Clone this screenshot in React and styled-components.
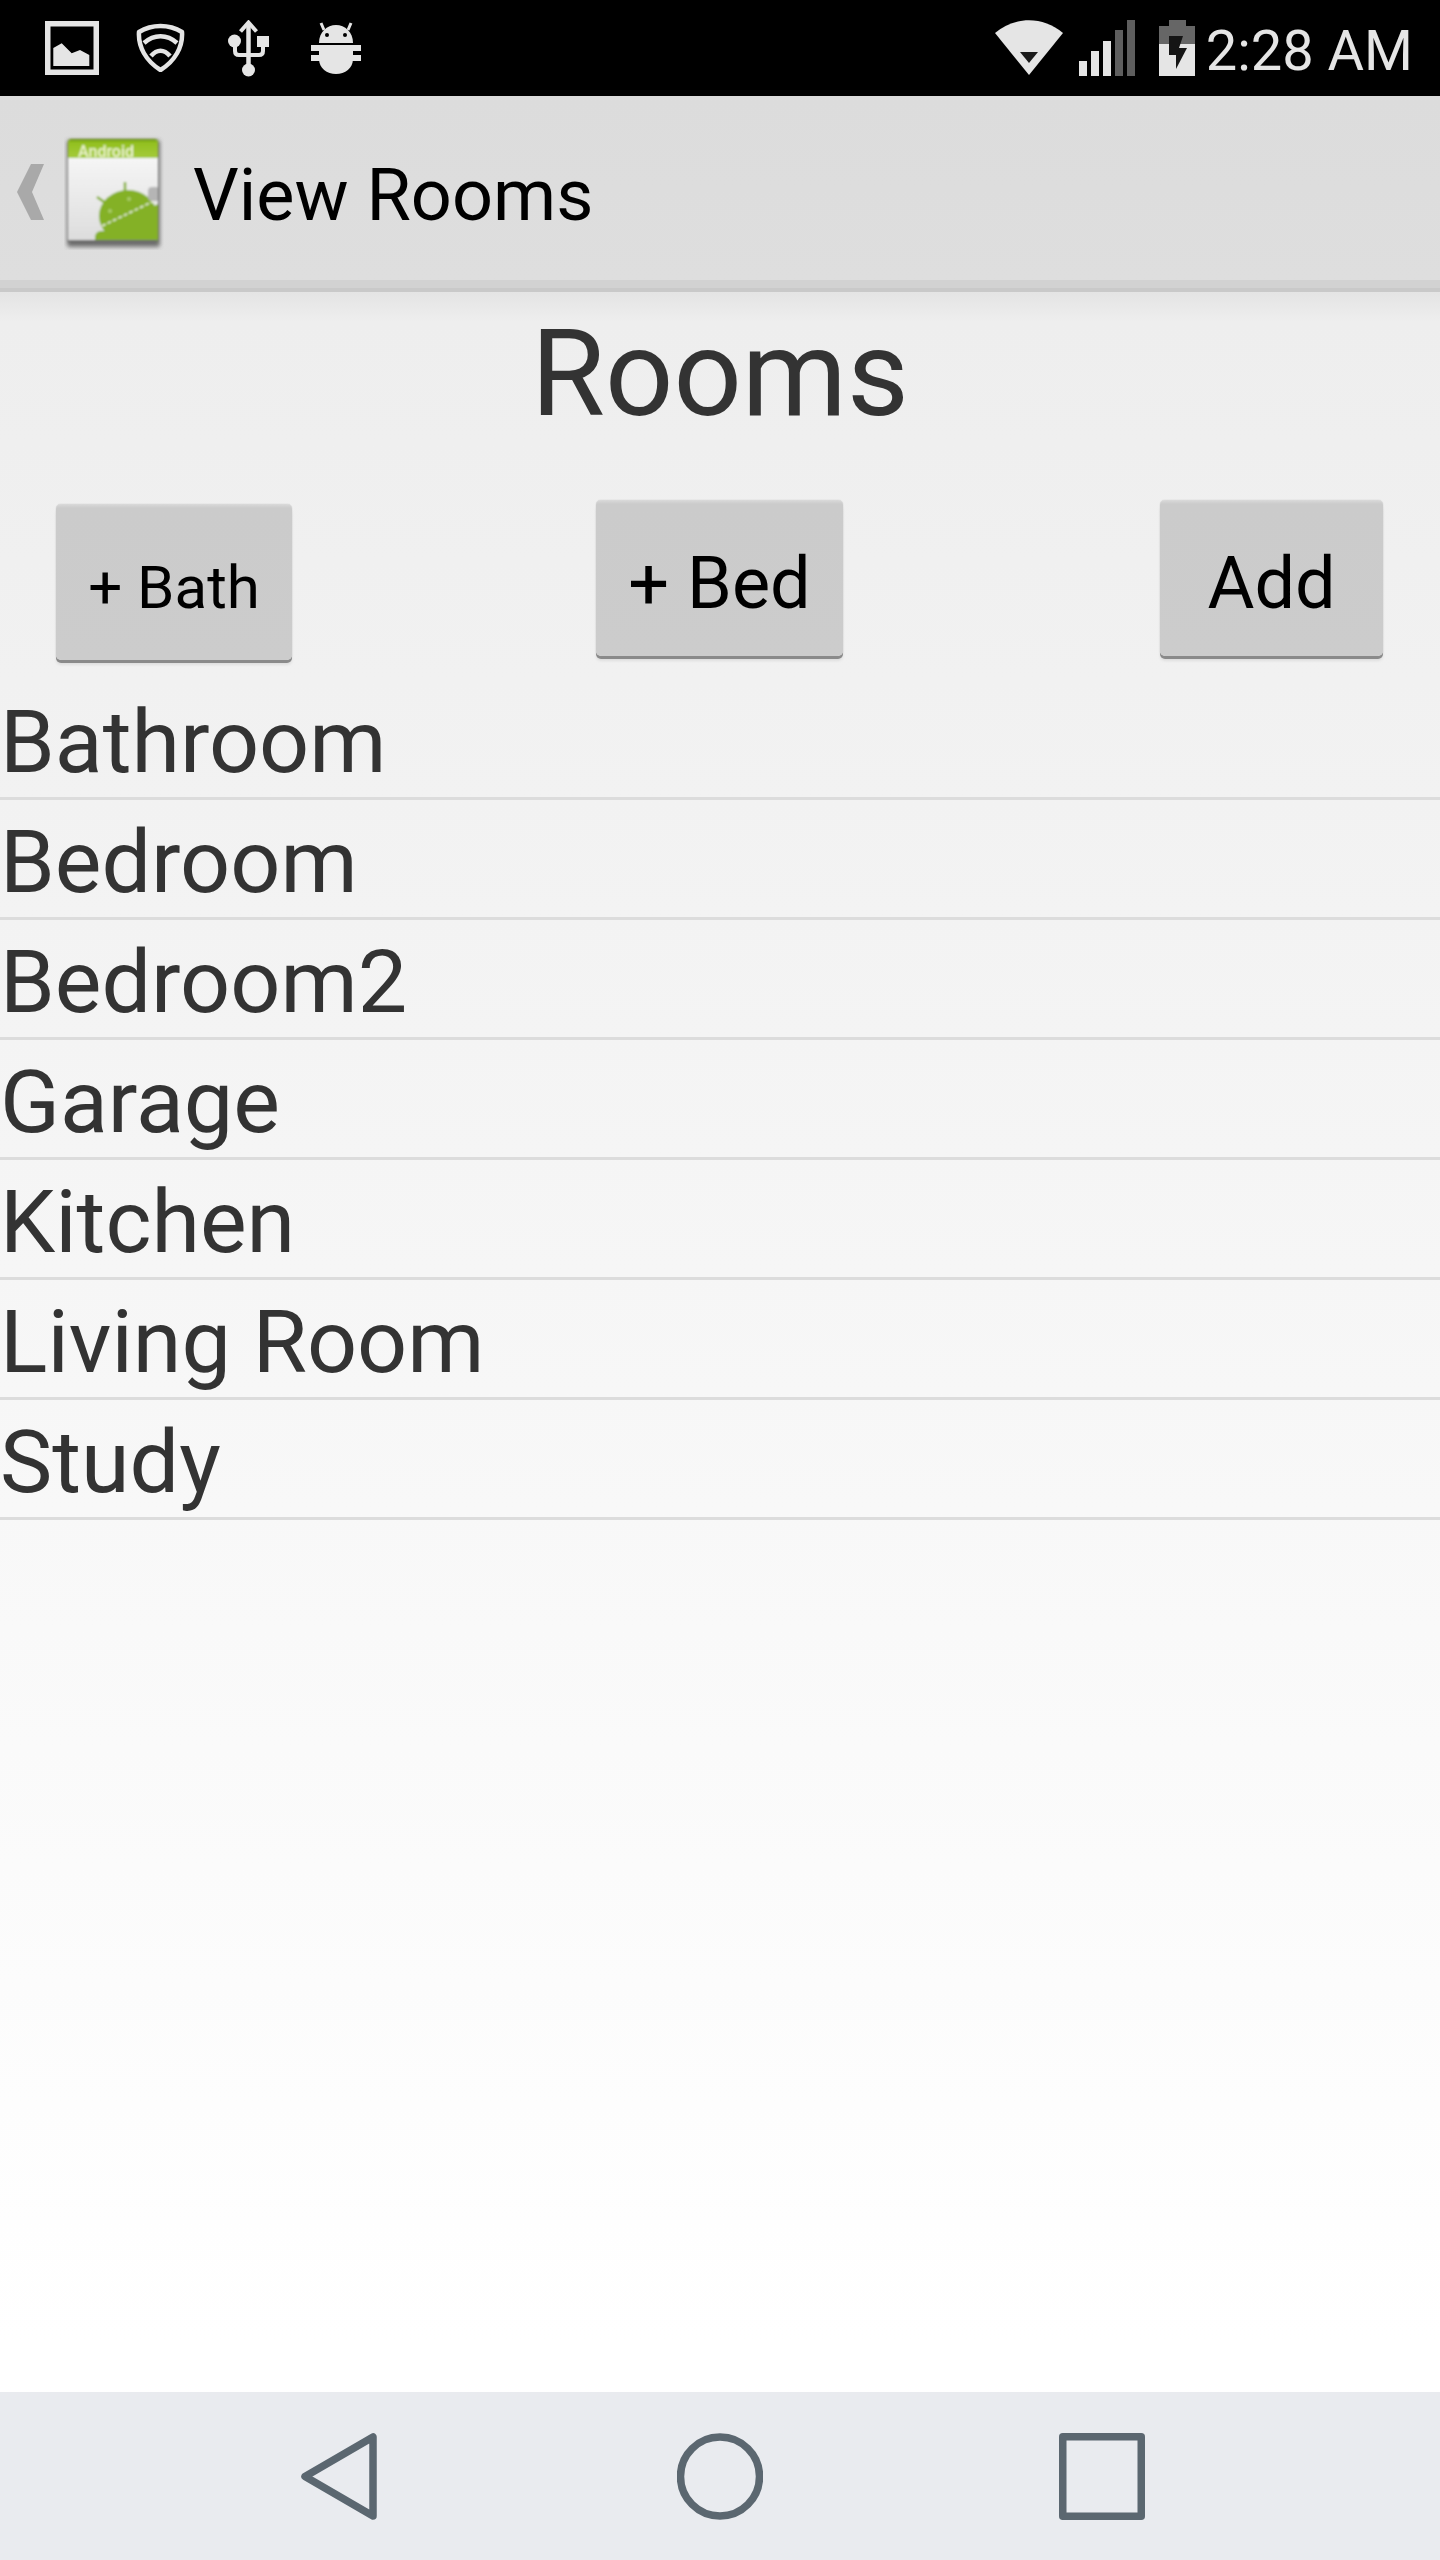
import styled, { createGlobalStyle } from "styled-components";

const GlobalStyle = createGlobalStyle`
  html, body {
    margin: 0;
    padding: 0;
    background: #fff;
  }
`;

const Page = styled.div`
  width: 1440px;
  height: 2560px;
  display: flex;
  flex-direction: column;
  font-family: Roboto, "Liberation Sans", sans-serif;
  overflow: hidden;
`;

const StatusBar = styled.div`
  height: 96px;
  flex: none;
  background: #000;
  display: flex;
  align-items: flex-start;
`;

const StatusIcon = styled.svg`
  display: block;
  flex: none;
  margin-top: ${(props) => props.$top}px;
  margin-left: ${(props) => props.$left}px;
`;

const Spacer = styled.div`
  flex: 1;
`;

const Clock = styled.span`
  margin: 18px 27px 0 11px;
  font-size: 56px;
  line-height: 66px;
  font-weight: 400;
  color: #e5e5e5;
  white-space: nowrap;
`;

const ActionBar = styled.div`
  height: 184px;
  flex: none;
  background: linear-gradient(180deg, #dcdcdc, #dedede);
  display: flex;
  align-items: flex-start;
  border-bottom: 8px solid #d2d2d2;
`;

const BarDivider = styled.div`
  height: 4px;
  flex: none;
  background: #c9c9c9;
`;

const BackArrowIcon = styled.svg`
  display: block;
  flex: none;
  margin: 68px 0 0 17px;
`;

const AppIconImage = styled.svg`
  display: block;
  flex: none;
  margin: 38px 0 0 20px;
`;

const AppTitle = styled.div`
  margin: 58px 0 0 29px;
  font-size: 72px;
  line-height: 84px;
  color: #000;
  white-space: nowrap;
`;

const Content = styled.div`
  flex: 1;
  display: flex;
  flex-direction: column;
  background: linear-gradient(180deg, #e4e4e4 0, #eeeeee 30px, #ffffff 2050px);
`;

const Heading = styled.h1`
  margin: 0;
  height: 208px;
  text-align: center;
  font-size: 120px;
  line-height: 164px;
  font-weight: 400;
  color: #333;
`;

const ButtonRow = styled.div`
  height: 180px;
  display: flex;
  align-items: flex-start;
`;

const RoomButton = styled.button`
  flex: none;
  width: ${(props) => props.$width}px;
  height: 156px;
  margin-left: ${(props) => props.$left}px;
  margin-top: ${(props) => props.$top || 0}px;
  padding: 10px 0 0;
  border: none;
  border-radius: 5px;
  background: linear-gradient(180deg, #dadada 0, #cbcbcb 4px, #cccccc 100%);
  box-shadow: 0 3px 0 #8a8a8a, 0 0 1px #aaa, 0 5px 3px rgba(0, 0, 0, 0.08);
  font-family: inherit;
  font-size: ${(props) => props.$size}px;
  color: #000;
`;

const RoomList = styled.div`
  display: flex;
  flex-direction: column;
`;

const RoomRow = styled.div`
  height: 114px;
  padding-top: 3px;
  border-bottom: 3px solid #dcdcdc;
  font-size: 88px;
  line-height: 117px;
  color: #333;
  white-space: nowrap;
`;

const NavBar = styled.div`
  height: 168px;
  flex: none;
  background: #e9ebef;
  display: flex;
  align-items: center;
`;

const NavIcon = styled.svg`
  display: block;
  flex: none;
  margin-left: ${(props) => props.$left}px;
`;

const rooms = [
  "Bathroom",
  "Bedroom",
  "Bedroom2",
  "Garage",
  "Kitchen",
  "Living Room",
  "Study",
];

function PictureIcon() {
  return (
    <StatusIcon $left={45} $top={21} width="54" height="54" viewBox="0 0 54 54">
      <rect x="2.750" y="2.750" width="48.500" height="48.500" fill="none" stroke="#e5e5e5" strokeWidth="5.500" />
      <path d="M8.300 45V27L16.700 22.300L26.700 32.300L35 29L44.300 34V45Z" fill="#e5e5e5" />
    </StatusIcon>
  );
}

function ShieldIcon() {
  return (
    <StatusIcon $left={37} $top={23} width="49" height="49" viewBox="0 0 49 49" fill="none" stroke="#e5e5e5" strokeWidth="4.500" strokeLinejoin="round">
      <path d="M3 9C16 1 33 1 46 9C47 24 39 38 24.500 47C10 38 2 24 3 9Z" />
      <path d="M8 20C18 11 31 11 41 20" />
      <path d="M15 33C21 26 28 26 34 33" />
    </StatusIcon>
  );
}

function UsbIcon() {
  return (
    <StatusIcon $left={43} $top={20} width="41" height="57" viewBox="0 0 41 57">
      <path d="M12.500 11.500L20.500 2.500L28.500 11.500" fill="none" stroke="#e5e5e5" strokeWidth="4" />
      <path d="M20.500 3V48" stroke="#e5e5e5" strokeWidth="4.500" />
      <path d="M7 22V31Q7 35 11 35H31Q35 35 35 31V22" fill="none" stroke="#e5e5e5" strokeWidth="4" />
      <circle cx="6.500" cy="21" r="6.500" fill="#e5e5e5" />
      <rect x="29" y="16" width="12" height="11" fill="#e5e5e5" />
      <circle cx="20.500" cy="50" r="6.500" fill="#e5e5e5" />
    </StatusIcon>
  );
}

function BugIcon() {
  return (
    <StatusIcon $left={42} $top={22} width="50" height="52" viewBox="0 0 50 52">
      <path d="M8 21C8 10 16 3 25 3C34 3 42 10 42 21Z" fill="#e5e5e5" />
      <path d="M13 8L10 1M37 8L40 1" stroke="#e5e5e5" strokeWidth="3" />
      <circle cx="16" cy="13" r="2" fill="#000" />
      <circle cx="34" cy="13" r="2" fill="#000" />
      <path d="M8 23H42V37C42 46 34 52 25 52C16 52 8 46 8 37Z" fill="#e5e5e5" />
      <rect x="0" y="23" width="50" height="6" fill="#e5e5e5" />
      <rect x="0" y="33" width="50" height="6" fill="#e5e5e5" />
    </StatusIcon>
  );
}

function WifiIcon() {
  return (
    <StatusIcon $left={0} $top={20} width="68" height="55" viewBox="0 0 68 55">
      <path d="M0 13C20 -4 48 -4 68 13L34 55Z" fill="#e5e5e5" />
      <path d="M25 32H43L34 43Z" fill="#1a1a1a" />
    </StatusIcon>
  );
}

function SignalIcon() {
  const bars = [15, 25, 35, 46, 56];
  return (
    <StatusIcon $left={16} $top={20} width="56" height="56" viewBox="0 0 56 56">
      {bars.map((h, i) => (
        <rect key={h} x={i * 12} y={56 - h} width="8" height={h} fill={i < 3 ? "#e5e5e5" : "#5e5e5e"} />
      ))}
    </StatusIcon>
  );
}

function BatteryIcon() {
  return (
    <StatusIcon $left={24} $top={20} width="36" height="56" viewBox="0 0 36 56">
      <path d="M10 0H27V6H36V24H0V6H10Z" fill="#666" />
      <rect x="0" y="24" width="36" height="32" fill="#e5e5e5" />
      <path d="M10 16H24L20 28H28L17 49V35H10Z" fill="#151515" />
    </StatusIcon>
  );
}

function AppIcon() {
  return (
    <AppIconImage width="100" height="116" viewBox="0 0 100 116">
      <defs>
        <linearGradient id="paper" x1="0" y1="0" x2="0" y2="1">
          <stop offset="0" stopColor="#fbfbfb" />
          <stop offset="1" stopColor="#dcdcdc" />
        </linearGradient>
        <linearGradient id="band" x1="0" y1="0" x2="0" y2="1">
          <stop offset="0" stopColor="#6f9a1a" />
          <stop offset="0.2" stopColor="#93c01f" />
          <stop offset="1" stopColor="#a4cb3a" />
        </linearGradient>
        <filter id="soft" x="-10%" y="-10%" width="120%" height="120%">
          <feGaussianBlur stdDeviation="0.8" />
        </filter>
        <filter id="shadow" x="-10%" y="-10%" width="120%" height="120%">
          <feGaussianBlur stdDeviation="2" />
        </filter>
        <clipPath id="sheet">
          <rect x="4" y="5" width="90" height="104" rx="3" />
        </clipPath>
      </defs>
      <rect x="3" y="6" width="93" height="107" rx="3" fill="#444" opacity="0.7" filter="url(#shadow)" />
      <g filter="url(#soft)">
        <g clipPath="url(#sheet)">
          <rect x="4" y="5" width="90" height="104" fill="url(#paper)" />
          <rect x="4" y="5" width="90" height="19" fill="url(#band)" />
          <text x="14" y="23" fontSize="16" fontWeight="500" fontFamily="Roboto, sans-serif" fill="#eef5d0">Android</text>
          <g fill="#84b127">
            <ellipse cx="64" cy="82" rx="29" ry="26" />
            <path d="M41 97L94 70V109H48Z" />
            <rect x="31" y="97" width="17" height="14" rx="6" />
          </g>
          <path d="M61 48V60M33 63L43 70" stroke="#84b127" strokeWidth="2.500" />
          <circle cx="46" cy="77" r="2" fill="#a9cc66" />
          <circle cx="65" cy="65" r="2" fill="#a9cc66" />
          <path d="M38 92L92 66" stroke="#eef2e2" strokeWidth="1.500" strokeDasharray="4 2" />
          <rect x="84" y="53" width="12" height="14" rx="4" fill="#b5b5b5" />
          <rect x="4" y="106" width="90" height="4" fill="#6a6a6a" />
        </g>
      </g>
    </AppIconImage>
  );
}

export default function App() {
  return (
    <Page>
      <GlobalStyle />
      <StatusBar>
        <PictureIcon />
        <ShieldIcon />
        <UsbIcon />
        <BugIcon />
        <Spacer />
        <WifiIcon />
        <SignalIcon />
        <BatteryIcon />
        <Clock>2:28 AM</Clock>
      </StatusBar>
      <ActionBar>
        <BackArrowIcon width="27" height="56" viewBox="0 0 27 56">
          <path d="M14 0H27L15 28L27 56H14L0 28Z" fill="#a9a9a9" />
        </BackArrowIcon>
        <AppIcon />
        <AppTitle>View Rooms</AppTitle>
      </ActionBar>
      <BarDivider />
      <Content>
        <Heading>Rooms</Heading>
        <ButtonRow>
          <RoomButton $width={236} $left={56} $top={4} $size={60}>+ Bath</RoomButton>
          <RoomButton $width={247} $left={304} $size={72}>+ Bed</RoomButton>
          <RoomButton $width={223} $left={317} $size={72}>Add</RoomButton>
        </ButtonRow>
        <RoomList>
          {rooms.map((room) => (
            <RoomRow key={room}>{room}</RoomRow>
          ))}
        </RoomList>
      </Content>
      <NavBar>
        <NavIcon $left={301} width="76" height="87" viewBox="0 0 76 87" fill="none" stroke="#5b6770" strokeWidth="7.500" strokeLinejoin="round">
          <path d="M72 4V83L4 43.500Z" />
        </NavIcon>
        <NavIcon $left={300} width="86" height="87" viewBox="0 0 86 87" fill="none" stroke="#5b6770" strokeWidth="7.500">
          <circle cx="43" cy="43.500" r="39.500" />
        </NavIcon>
        <NavIcon $left={296} width="86" height="87" viewBox="0 0 86 87" fill="none" stroke="#5b6770" strokeWidth="7.500" strokeLinejoin="round">
          <rect x="3.750" y="3.750" width="78.500" height="79.500" />
        </NavIcon>
      </NavBar>
    </Page>
  );
}
